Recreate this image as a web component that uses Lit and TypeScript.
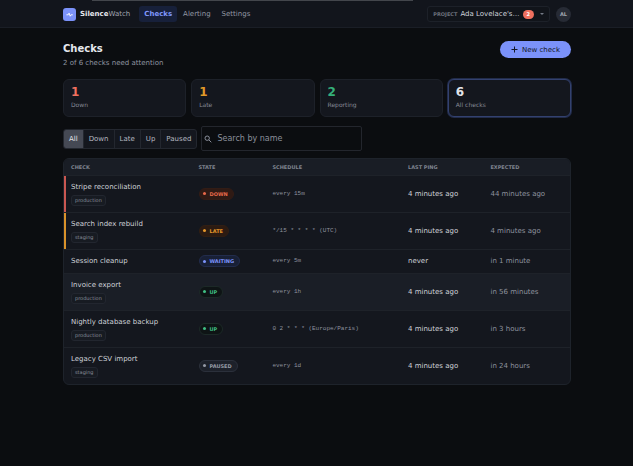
import { LitElement, html, css, svg, nothing } from "lit";
import { customElement, property, state } from "lit/decorators.js";
import { classMap } from "lit/directives/class-map.js";

type State = "down" | "late" | "waiting" | "up" | "paused";

interface Check {
  name: string;
  tag?: string;
  state: State;
  schedule: string;
  lastPing: string;
  expected: string;
  active?: boolean;
}

const CHECKS: Check[] = [
  { name: "Stripe reconciliation", tag: "production", state: "down", schedule: "every 15m", lastPing: "4 minutes ago", expected: "44 minutes ago" },
  { name: "Search index rebuild", tag: "staging", state: "late", schedule: "*/15 * * * * (UTC)", lastPing: "4 minutes ago", expected: "4 minutes ago" },
  { name: "Session cleanup", state: "waiting", schedule: "every 5m", lastPing: "never", expected: "in 1 minute" },
  { name: "Invoice export", tag: "production", state: "up", schedule: "every 1h", lastPing: "4 minutes ago", expected: "in 56 minutes", active: true },
  { name: "Nightly database backup", tag: "production", state: "up", schedule: "0 2 * * * (Europe/Paris)", lastPing: "4 minutes ago", expected: "in 3 hours" },
  { name: "Legacy CSV import", tag: "staging", state: "paused", schedule: "every 1d", lastPing: "4 minutes ago", expected: "in 24 hours" },
];

const STATS = [
  { key: "down", value: 1, label: "Down" },
  { key: "late", value: 1, label: "Late" },
  { key: "up", value: 2, label: "Reporting" },
  { key: "all", value: 6, label: "All checks" },
];

const FILTERS = ["All", "Down", "Late", "Up", "Paused"];

@customElement("state-pill")
export class StatePill extends LitElement {
  @property() state: State = "up";

  static styles = css`
    :host { display: inline-flex; vertical-align: middle; }
    .pill {
      display: inline-flex; align-items: center; gap: 4px; box-sizing: border-box;
      height: 12px; padding: 0 5px 0 3px; border: 1px solid; border-radius: 6px;
      font: bold 5px/10px "DejaVu Sans", sans-serif; text-transform: uppercase;
    }
    .dot { width: 3px; height: 3px; border-radius: 50%; background: currentColor; }
    .down { color: #e8694a; background: #2f1a14; border-color: #321c15; }
    .late { color: #e5982a; background: #2c1b12; border-color: #301e13; }
    .waiting { color: #7c93fa; background: #182036; border-color: #222c4c; }
    .up { color: #3fbf83; background: #0e1415; border-color: #1c2927; }
    .paused { color: #9499a5; background: #1d212a; border-color: #2b303b; }
  `;

  render() {
    return html`<span class="pill ${this.state}"><span class="dot"></span>${this.state}</span>`;
  }
}

@customElement("app-root")
export class AppRoot extends LitElement {
  @state() private filter = "All";

  static styles = css`
    :host {
      display: block; min-height: 100vh; background: #0b0d10; color: #ced1d8;
      font: 7px/10px "DejaVu Sans", sans-serif;
    }
    * { box-sizing: border-box; }
    button, input { font: inherit; color: inherit; margin: 0; }
    button { cursor: pointer; }
    a { color: inherit; text-decoration: none; }
    .topbar {
      background: #12151c; border-bottom: 1px solid #1a1e26; padding: 0 62px 0 63px;
    }
    .edge { height: 1px; margin: 0 158px 0 29px; background: #43464c; }
    .bar { display: flex; align-items: center; height: 26px; }
    .brand { display: flex; align-items: center; gap: 4px; color: #a0a5b0; }
    .brand b { color: #e6e8ee; }
    .logo { width: 13px; height: 13px; display: block; }
    nav { display: flex; gap: 1px; margin-left: 9px; }
    nav a { padding: 3px 5px; border-radius: 3px; color: #9398a4; }
    nav .current { background: #17203a; color: #7f97fb; font-weight: bold; }
    .account { display: flex; align-items: center; gap: 6px; margin-left: auto; }
    .project {
      display: flex; align-items: center; gap: 3px; height: 16px; padding: 0 5px;
      background: #11141a; border: 1px solid #1d2129; border-radius: 3px; color: #d0d3da;
    }
    .project .caption { font-size: 5px; font-weight: bold; color: #6b707b; }
    .count {
      padding: 0 4px; height: 9px; border-radius: 5px; background: #f0705f; color: #fff;
      font-size: 5px; line-height: 9px; font-weight: bold;
    }
    .caret { width: 4px; height: 4px; margin-left: 3px; fill: #757a86; }
    .avatar {
      width: 15px; height: 15px; border: 0; border-radius: 50%; padding: 0;
      background: #272b35; color: #a2a7b2; font-size: 5px; font-weight: bold;
    }
    main { padding: 13px 62px 20px 63px; }
    .heading { display: flex; justify-content: space-between; align-items: flex-start; }
    h1 { margin: 0; font-size: 10px; line-height: 16px; color: #e6e8ee; }
    .heading p { margin: 1px 0 0; color: #9095a1; }
    .new {
      display: flex; align-items: center; gap: 4px; height: 17px; padding: 0 11px;
      border: 0; border-radius: 9px; background: #7b92fa; color: #131726;
    }
    .new svg { width: 7px; height: 7px; stroke: currentColor; fill: none; }
    .stats { display: grid; grid-template-columns: repeat(4, 1fr); gap: 5px; margin-top: 11px; }
    .stat {
      display: block; height: 38px; padding: 5px 7px 7px; text-align: left;
      background: #14171e; border: 1px solid #1d2129; border-radius: 6px; color: #858a96;
      font-size: 6px; line-height: 8px;
    }
    .stat strong { display: block; margin-bottom: 1px; font-size: 12px; line-height: 15px; }
    .stat .down { color: #f0705f; }
    .stat .late { color: #e09a28; }
    .stat .up { color: #35b07a; }
    .stat .all { color: #e1e3e9; }
    .stat.chosen { border-color: #33416f; box-shadow: 0 0 0 1px #222c4a; }
    .tools { display: flex; align-items: center; gap: 4px; margin-top: 9px; }
    .filters {
      display: flex; height: 20px; border: 1px solid #23272f; border-radius: 3px; overflow: hidden;
      background: #14171e;
    }
    .filters button { padding: 0 5px; border: 0; background: none; color: #b4b8c1; }
    .filters button + button { border-left: 1px solid #23272f; }
    .filters .on { background: #454954; color: #e0e2e8; }
    .search {
      display: flex; align-items: center; gap: 5px; width: 161px; height: 25px; padding: 0 2px;
      background: #0b0d10; border: 1px solid #23262d; border-radius: 2px;
    }
    .search svg { flex: none; width: 8px; height: 8px; stroke: #8a8f9b; fill: none; }
    .search input {
      flex: 1; min-width: 0; padding: 0; border: 0; outline: 0; background: none; font-size: 8px;
    }
    .search input::placeholder { color: #8a8f9b; opacity: 1; }
    .panel {
      margin-top: 7px; border: 1px solid #1e232b; border-radius: 6px; overflow: hidden;
      background: #14171e;
    }
    table { width: 100%; border-collapse: collapse; table-layout: fixed; }
    th, td { padding: 0 7px; text-align: left; vertical-align: middle; white-space: nowrap; }
    thead th { height: 16px; background: #191d25; color: #7e838f; font-size: 5px; font-weight: bold; }
    tbody tr { height: 37px; border-top: 1px solid #1e2229; }
    tbody tr.short { height: 24px; }
    tbody tr.active { background: #1a1e26; }
    .w-check { width: 25.2%; }
    .w-state { width: 14.6%; }
    .w-schedule { width: 26.8%; }
    .w-ping { width: 16.3%; }
    .name { font-weight: normal; }
    tr.down .name { box-shadow: inset 2px 0 #c95751; }
    tr.late .name { box-shadow: inset 2px 0 #d9922a; }
    .tag {
      display: block; width: fit-content; height: 11px; margin-top: 3px; padding: 0 3px;
      border: 1px solid #22262f; border-radius: 3px; background: #171b22; color: #8a8f9b;
      font-size: 5px; line-height: 9px;
    }
    .schedule { font: 6px/10px "Liberation Mono", monospace; color: #8e939e; }
    .expected { color: #8e939e; }
  `;

  private renderRow(check: Check) {
    const classes = { [check.state]: true, short: !check.tag, active: !!check.active };
    return html`
      <tr class=${classMap(classes)}>
        <th class="name" scope="row">
          <a href="#check">${check.name}</a>
          ${check.tag ? html`<span class="tag">${check.tag}</span>` : nothing}
        </th>
        <td><state-pill .state=${check.state}></state-pill></td>
        <td class="schedule">${check.schedule}</td>
        <td>${check.lastPing}</td>
        <td class="expected">${check.expected}</td>
      </tr>
    `;
  }

  render() {
    const visible = CHECKS.filter((c) => this.filter === "All" || c.state === this.filter.toLowerCase());
    return html`
      <header class="topbar">
        <div class="edge"></div>
        <div class="bar">
          <a class="brand" href="#home">
            <svg class="logo" viewBox="0 0 13 13" aria-hidden="true">
              ${svg`<rect width="13" height="13" rx="3" fill="#7b92fa"/>
              <path d="M3.8 6.8h1.4l.9-1.7 1.1 3.1.8-1.4h1.4" fill="none" stroke="#fff" stroke-width=".9" stroke-linejoin="round" stroke-linecap="round"/>`}
            </svg>
            <span><b>Silence</b>Watch</span>
          </a>
          <nav>
            <a class="current" href="#checks" aria-current="page">Checks</a>
            <a href="#alerting">Alerting</a>
            <a href="#settings">Settings</a>
          </nav>
          <div class="account">
            <button class="project" aria-haspopup="listbox">
              <span class="caption">PROJECT</span>
              <span>Ada Lovelace's…</span>
              <span class="count">2</span>
              <svg class="caret" viewBox="0 0 4 4" aria-hidden="true"><path d="M0 1h4L2 3z" /></svg>
            </button>
            <button class="avatar" aria-label="Account">AL</button>
          </div>
        </div>
      </header>
      <main>
        <div class="heading">
          <div>
            <h1>Checks</h1>
            <p>2 of 6 checks need attention</p>
          </div>
          <button class="new">
            <svg viewBox="0 0 7 7" aria-hidden="true"><path d="M3.5 .5v6M.5 3.5h6" /></svg>
            New check
          </button>
        </div>
        <div class="stats">
          ${STATS.map((s) => html`
            <button class=${classMap({ stat: true, chosen: s.key === "all" })}>
              <strong class=${s.key}>${s.value}</strong>${s.label}
            </button>
          `)}
        </div>
        <div class="tools">
          <div class="filters" role="group" aria-label="State">
            ${FILTERS.map((f) => html`
              <button
                class=${classMap({ on: f === this.filter })}
                aria-pressed=${f === this.filter}
                @click=${() => (this.filter = f)}
              >${f}</button>
            `)}
          </div>
          <label class="search">
            <svg viewBox="0 0 8 8" aria-hidden="true"><circle cx="3.2" cy="3.2" r="2.2" /><path d="M4.9 4.9 7.3 7.3" /></svg>
            <input type="text" placeholder="Search by name" aria-label="Search by name" />
          </label>
        </div>
        <div class="panel">
          <table>
            <thead>
              <tr>
                <th class="w-check" scope="col">CHECK</th>
                <th class="w-state" scope="col">STATE</th>
                <th class="w-schedule" scope="col">SCHEDULE</th>
                <th class="w-ping" scope="col">LAST PING</th>
                <th scope="col">EXPECTED</th>
              </tr>
            </thead>
            <tbody>${visible.map((c) => this.renderRow(c))}</tbody>
          </table>
        </div>
      </main>
    `;
  }
}
